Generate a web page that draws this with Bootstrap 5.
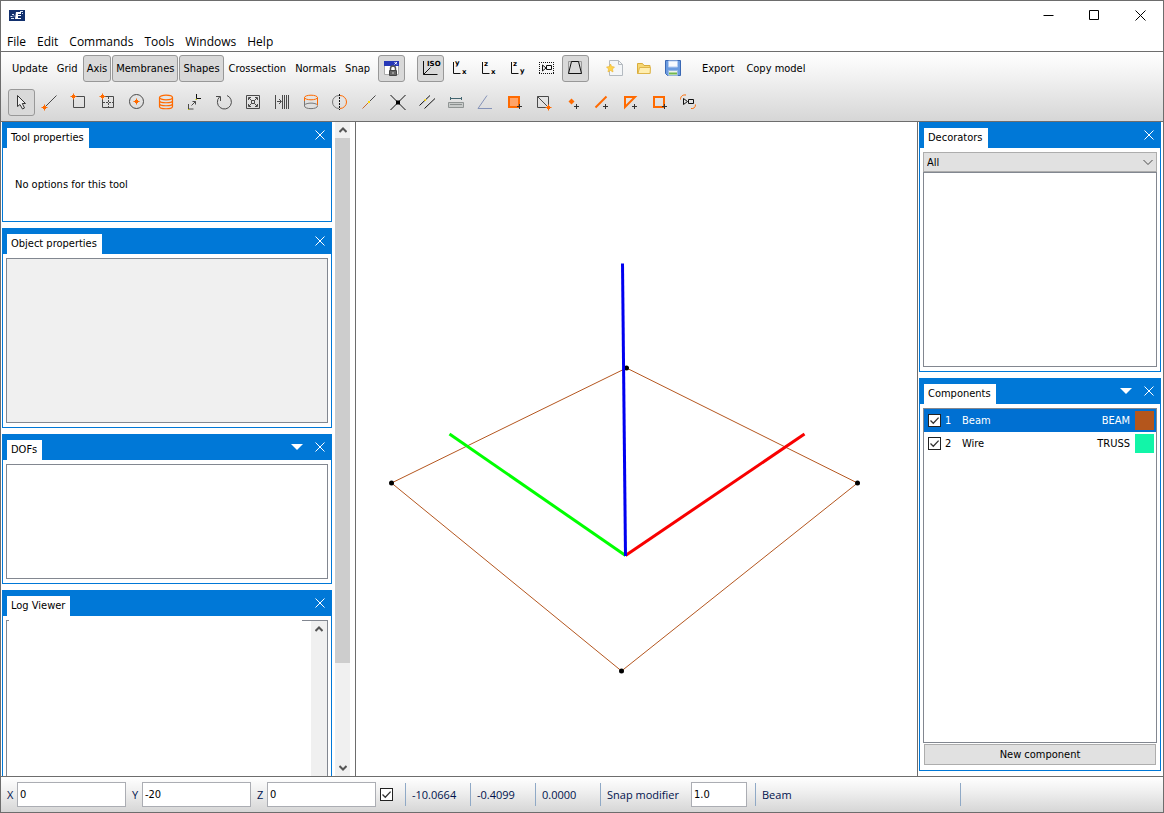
<!DOCTYPE html>
<html lang="en">
<head>
<meta charset="utf-8">
<meta name="viewport" content="width=device-width, initial-scale=1">
<title>Model editor</title>
<link href="https://cdn.jsdelivr.net/npm/bootstrap@5.3.0/dist/css/bootstrap.min.css" rel="stylesheet">
<style>
:root { --ui: "DejaVu Sans Condensed", "DejaVu Sans", sans-serif; --menu: "Open Sans", "Noto Sans", sans-serif; --accent: #0078d7; --line: #6d6d6d; --field: #828790; --orange: #ff6a00; }
body { font-family: var(--ui); font-size: 11px; line-height: 15px; color: #000; background: #fff; }
.app-window { height: 100vh; border: 1px solid var(--line); }
.titlebar { height: 28px; padding-left: 8px; }
.win-btn { width: 46px; height: 28px; border: 0; background: none; padding: 0; display: grid; place-items: center; }
.menubar { font-family: var(--menu); font-size: 12px; line-height: 16px; gap: 11px; padding: 5px 6px 1px; border-bottom: 1px solid var(--line); }
.menubar a { color: #000; text-decoration: none; }
.tools { background: linear-gradient(#fff, #f2f2f2 35%, #d6d6d6); border-bottom: 1px solid var(--line); padding: 3px 7px 5px; }
.tool-row { gap: 1px; }
.tool-row + .tool-row { margin-top: 7px; }
.tool { height: 27px; border: 1px solid transparent; border-radius: 3px; background: none; padding: 0 3px; color: #000; white-space: nowrap; line-height: 15px; }
.tool.on { border-color: #989898; background: #d9d9d9; }
.tool-icon { width: 27px; padding: 0; }
.tool-icon + .tool-icon { margin-left: 1px; }
.tool-icon svg { display: block; width: 25px; height: 25px; }
.tool svg text { font-family: "DejaVu Sans", sans-serif; font-weight: 700; font-size: 7px; fill: #000; stroke: none; }
svg { fill: none; stroke: #4a4a4a; stroke-width: 1; }
svg .o { stroke: var(--orange); }
svg .k { stroke: #111; }
.tool.gap-before { margin-left: 11px; }
.tool.gap-small { margin-left: 3px; }
.side-left { width: 355px; border-right: 1px solid var(--line); }
.stack { gap: 6px; padding-left: 1px; }
.dock { border: 1px solid var(--accent); background: #fff; }
.dock-head { background: var(--accent); height: 25px; padding-left: 4px; }
.dock-tab { background: #fff; height: 20px; padding: 2px 5px 0 4px; white-space: nowrap; line-height: 16px; }
.head-btn { border: 0; background: none; padding: 0; width: 23px; height: 23px; display: grid; place-items: center; }
.head-btn svg { stroke: #fff; }
.dock-body { padding: 4px 3px; }
.dock-body.roomy { padding-bottom: 5px; }
.well { border: 1px solid var(--field); }
.well.off { background: #f0f0f0; }
.tool-note { padding: 29px 12px 0; }
.h-tool { height: 100px; } .h-object { height: 200px; } .h-dof { height: 150px; } .h-log { height: 250px; }
.vbar { width: 15px; margin: 0 5px 0 3px; background: #f0f0f0; }
.vbar button, .logbar button { border: 0; background: none; padding: 0; height: 16px; display: grid; place-items: center; }
.vbar svg, .logbar svg { stroke: #555; stroke-width: 2; }
.thumb { flex: 0 1 525px; background: #cdcdcd; }
.logbar { width: 16px; background: #f0f0f0; }
.log-area { border: 0; resize: none; outline: 0; margin: -1px 9px 0 2px; background: #fff; }
.side-right { width: 246px; border-left: 1px solid var(--line); padding: 0 2px 5px 1px; gap: 6px; }
.h-decor { height: 250px; }
.combo { appearance: none; height: 20px; border: 1px solid #adadad; background-color: #e1e1e1; border-radius: 0; padding: 0 3px; font-size: 11px; line-height: 15px; color: #000; }
.combo-wrap svg { position: absolute; right: 4px; top: 7px; pointer-events: none; }
.comp-table { border-collapse: collapse; width: 100%; table-layout: fixed; }
.comp-table td { height: 23px; padding: 0; vertical-align: middle; }
.comp-table tr.sel { background: #0070d2; color: #fff; }
.c-check { width: 21px; } .c-num { width: 17px; } .c-color { width: 26px; }
.check { appearance: none; display: block; width: 13px; height: 13px; margin: 0; border: 1px solid #222; background: #fff url("data:image/svg+xml,%3Csvg xmlns='http://www.w3.org/2000/svg' viewBox='0 0 11 11'%3E%3Cpath d='M1.5 5.5l2.8 2.8L9.6 2.6' fill='none' stroke='%23333' stroke-width='1.3'/%3E%3C/svg%3E"); }
.check:not(:checked) { background-image: none; }
.swatch { width: 19px; height: 19px; margin-left: 5px; }
.push { height: 21px; border: 1px solid #adadad; background: #e1e1e1; padding: 0; margin: 1px 1px 0; }
.status { font-family: var(--menu); background: linear-gradient(#fff, #f2f2f2 35%, #d6d6d6); border-top: 1px solid var(--line); height: 36px; color: #00134d; padding-left: 6px; }
.status input[type=text] { font-family: var(--ui); height: 25px; border: 1px solid #abadb3; padding: 0 2px; color: #000; border-radius: 0; background: #fff; }
.axis-label { width: 10px; }
.w-axis { width: 109px; margin-right: 6px; }
.status .check { margin: 0 12px 0 -2px; }
.w-snap { width: 56px; margin-right: 8px; }
.cell { border-left: 1px solid #8fa9c6; height: 23px; padding-left: 6px; width: 65px; line-height: 23px; white-space: nowrap; }
.snap-cell { width: 91px; }
.name-cell { width: 205px; }
</style>
</head>
<body>
<svg width="0" height="0" class="position-absolute" aria-hidden="true">
  <defs>
    <g id="oplus"><path d="M-3 0H3M0-3V3" stroke="#ff6a00"/><path d="M-1.500-1.500h3v3h-3z" fill="#ff6a00" stroke="none"/></g>
    <path id="dplus" d="M-2.500 0H2.500M0-2.500V2.500" stroke="#333"/>
  </defs>
</svg>
<div class="app-window d-flex flex-column overflow-hidden">
  <header class="titlebar d-flex align-items-center">
    <svg width="16" height="11" viewBox="0 0 16 11" stroke="none"><path fill="#12306e" stroke="none" d="M0 0h16v11H0z"/><path d="M7 2h5v2H9v1h3v1H9v2h3v1H6z" fill="#fff" stroke="none"/><path d="M1.500 6.500h2M3 4.500h2M2 8.500h3M11 1.500h3M13 3.500h1M4.500 6h1" stroke="#dbe6f8"/></svg>
    <div class="d-flex ms-auto">
      <button class="win-btn" aria-label="Minimize"><svg width="11" height="11"><path d="M.5 5.500h10" stroke="#000"/></svg></button>
      <button class="win-btn" aria-label="Maximize"><svg width="11" height="11"><path d="M.5.5h9v9h-9z" stroke="#000"/></svg></button>
      <button class="win-btn" aria-label="Close"><svg width="11" height="11"><path d="M.5.5l10 10M10.500.5l-10 10" stroke="#000"/></svg></button>
    </div>
  </header>
  <nav class="menubar d-flex">
    <a href="#">File</a><a href="#">Edit</a><a href="#">Commands</a><a href="#">Tools</a><a href="#">Windows</a><a href="#">Help</a>
  </nav>
  <div class="tools" role="toolbar">
    <div class="tool-row d-flex">
      <button class="tool">Update</button>
      <button class="tool">Grid</button>
      <button class="tool on">Axis</button>
      <button class="tool on">Membranes</button>
      <button class="tool on">Shapes</button>
      <button class="tool">Crossection</button>
      <button class="tool">Normals</button>
      <button class="tool">Snap</button>
      <button class="tool tool-icon on gap-small" aria-label="Lock windows"><svg><path d="M5.500 5.500h14v13h-14z" fill="#fff" stroke="#aaa"/><path d="M5 5h15v5H5z" fill="#2638b8" stroke="none"/><path d="M15.500 6l2.500 2.500M18 6l-2.500 2.500" stroke="#fff"/><path d="M10.500 14.500h7v5h-7z" fill="#666" stroke="#444"/><path d="M11.500 14v-1.500a2.500 2.500 0 0 1 5 0V14" stroke="#555" stroke-width="1.500"/><path d="M14 16v2" stroke="#ccc"/></svg></button>
      <button class="tool tool-icon on gap-before" aria-label="Isometric view"><svg><path class="k" d="M5.500 5v13.500H19.500M5.500 18.500l7-7"/><text x="9" y="10">ISO</text></svg></button>
      <button class="tool tool-icon" aria-label="XY view"><svg><path class="k" d="M6.500 6v11.500h7"/><text x="8" y="9">y</text><text x="15" y="18">x</text></svg></button>
      <button class="tool tool-icon" aria-label="XZ view"><svg><path class="k" d="M6.500 6v11.500h7"/><text x="8" y="10">z</text><text x="15" y="18">x</text></svg></button>
      <button class="tool tool-icon" aria-label="YZ view"><svg><path class="k" d="M6.500 6v11.500h7"/><text x="8" y="10">z</text><text x="15" y="17">y</text></svg></button>
      <button class="tool tool-icon" aria-label="Camera frame"><svg><path class="k" d="M5 6.500h15M5 17.500h15M5.500 6v12M19.500 6v12" stroke-dasharray="1 1"/><path class="k" d="M8.500 9v6l3.500-3zM12.500 9.500h5v4h-5z"/></svg></button>
      <button class="tool tool-icon on" aria-label="Perspective"><svg><path d="M5.500 5.500h13v12h-13z" stroke="#999"/><path class="k" d="M8.500 5.500h7l3 12h-13z"/></svg></button>
      <button class="tool tool-icon gap-before" aria-label="New"><svg><path d="M7.500 4.500h9l4 4v11h-13z" fill="#f4f6f8" stroke="#b4bac0"/><path d="M16.500 4.500v4h4" stroke="#b4bac0"/><path d="M8.500 8l1.200 2.600 2.800.4-2 2 .5 3-2.500-1.500L6 16l.5-3-2-2 2.800-.4z" fill="#ffd34a" stroke="#eab130" stroke-width=".6"/></svg></button>
      <button class="tool tool-icon" aria-label="Open"><svg><path d="M6.500 17.500v-10h5l1.500 2h6v8z" fill="#f6d773" stroke="#d9ac3c"/><path d="M7 17.500l1.500-6h11l-.5 6z" fill="#ffeeb0" stroke="#dfb64c"/></svg></button>
      <button class="tool tool-icon" aria-label="Save"><svg><path d="M5.500 4.500h15v15h-13l-2-2z" fill="#6a9be0" stroke="#3a68b4"/><path d="M8.500 5h9v6h-9z" fill="#f6faff" stroke="#b5cdf0"/><path d="M8.500 14.500h9v5h-9z" fill="#eef3ee" stroke="#9ab8e0"/><path d="M9 17.500h8" stroke="#72b84e" stroke-width="2"/></svg></button>
      <button class="tool gap-before">Export</button>
      <button class="tool gap-small">Copy model</button>
    </div>
    <div class="tool-row d-flex">
      <button class="tool tool-icon on" aria-label="Select"><svg><path d="M8.500 5.500v11l2.500-2 2.500 4.500 2-1-2.200-4.500h3.200z" fill="#eee" stroke="#333"/></svg></button>
      <button class="tool tool-icon" aria-label="Line"><svg><path d="M7.500 16.500l11-11"/><use href="#oplus" x="6.500" y="17.500"/></svg></button>
      <button class="tool tool-icon" aria-label="Rectangle"><svg><path d="M6.500 6.500h11v11h-11z"/><use href="#oplus" x="6.500" y="6.500"/></svg></button>
      <button class="tool tool-icon" aria-label="Grid rectangle"><svg><path d="M6.500 6.500h11v11h-11z"/><path d="M12.500 7v10M7 12.500h10" stroke-dasharray="2 1"/><use href="#oplus" x="6.500" y="6.500"/></svg></button>
      <button class="tool tool-icon" aria-label="Circle"><svg><circle cx="11.500" cy="11.500" r="7"/><use href="#oplus" x="11.500" y="11.500"/></svg></button>
      <button class="tool tool-icon" aria-label="Cylinder"><svg><g class="o" stroke-width="1.200"><ellipse cx="12" cy="7.500" rx="6.500" ry="2.300"/><path d="M5.500 7.500v9c0 3 13 3 13 0v-9M5.500 10.500c0 3 13 3 13 0M5.500 13.500c0 3 13 3 13 0"/></g></svg></button>
      <button class="tool tool-icon" aria-label="Move"><svg><path class="k" d="M13.500 4v4.500H18"/><path d="M8.500 15.500l4-4M9.500 11.500h3v3M5.500 14v5h5"/><path d="M12.500 9.500h1.500M5 19.500h1" stroke="#cc0"/></svg></button>
      <button class="tool tool-icon" aria-label="Rotate"><svg><path d="M15 5.500a7 7 0 1 1-7.500 1.500M4 6.500h4.500v4.500"/></svg></button>
      <button class="tool tool-icon" aria-label="Scale"><svg><path d="M5.500 5.500h13v13h-13z"/><path d="M10.500 10.500h3v3h-3zM8 8l2.500 2.500M16 8l-2.500 2.500M8 16l2.500-2.500M16 16l-2.500-2.500M7.500 10V7.500H10M14 7.500h2.500V10M7.500 14v2.500H10M14 16.500h2.500V14"/></svg></button>
      <button class="tool tool-icon" aria-label="Array"><svg><path d="M5.500 5v14M7 11.500h4M9 9l2.500 2.500L9 14M12.500 5v14M14.500 5v14M16.500 5v14M18.500 5v14"/></svg></button>
      <button class="tool tool-icon" aria-label="Loft"><svg><ellipse cx="12" cy="7.500" rx="6.500" ry="2.300" class="o"/><path class="o" d="M18.500 7.500v8M5.500 7.500v4"/><path d="M5.500 11v5c0 3.500 13 3.500 13 0M5.500 15c2-2.500 11-2.500 13 0" stroke="#777"/></svg></button>
      <button class="tool tool-icon" aria-label="Mirror"><svg><path d="M11 5.500a6.500 6.500 0 0 0 0 13" stroke="#777"/><path class="o" d="M12 5.500a6.500 6.500 0 0 1 0 13"/><path class="k" d="M11.500 4v16" stroke-dasharray="2 1"/></svg></button>
      <button class="tool tool-icon" aria-label="Split"><svg><path d="M5.500 18.500l6-6" stroke="#c76b30"/><path d="M12.500 11.500l6-6"/><path d="M11 12h2" stroke="#ffd800" stroke-width="2"/></svg></button>
      <button class="tool tool-icon" aria-label="Intersect"><svg><path class="k" d="M4.500 5l15 15M19.500 5l-15 15"/><path d="M10 10.500h4v4h-4z" fill="#000" stroke="none"/></svg></button>
      <button class="tool tool-icon" aria-label="Parallel"><svg><path class="k" d="M4.500 15.500l10.500-10M9.500 18.500l10.500-10"/><path d="M9.500 10h1.500" stroke="#ffd800" stroke-width="2"/></svg></button>
      <button class="tool tool-icon" aria-label="Measure"><svg><path d="M4.500 12.500h15v5h-15z" fill="#c8cbca" stroke="#909594"/><path d="M6 14.500h12" stroke="#8b908f"/><path d="M6.500 8.500h11M6.500 7v3M17.500 7v3" stroke="#426570"/></svg></button>
      <button class="tool tool-icon" aria-label="Angle"><svg><path d="M14 5.500l-9 13h14" stroke="#8593b8"/></svg></button>
      <button class="tool tool-icon" aria-label="Add surface"><svg><path d="M7 7h10v10H7z" fill="#ffa468" class="o" stroke-width="2"/><use href="#dplus" x="17.500" y="16.500"/></svg></button>
      <button class="tool tool-icon" aria-label="Add opening"><svg><path d="M6.500 6.500h11v11h-11zM6.500 6.500l11 11"/><use href="#oplus" x="17.500" y="17.500"/></svg></button>
      <button class="tool tool-icon" aria-label="Add point"><svg><path d="M11.500 8.500l3 3-3 3-3-3z" fill="#ff6a00" stroke="none"/><use href="#dplus" x="16.500" y="16.500"/></svg></button>
      <button class="tool tool-icon" aria-label="Add line"><svg><path class="o" d="M6.500 17.500l11-11" stroke-width="2"/><use href="#dplus" x="16.500" y="16.500"/></svg></button>
      <button class="tool tool-icon" aria-label="Add triangle"><svg><path class="o" d="M7 7h10l-10 10z" stroke-width="2"/><use href="#dplus" x="16.500" y="16.500"/></svg></button>
      <button class="tool tool-icon" aria-label="Add square"><svg><path class="o" d="M7 7h10v10H7z" stroke-width="2"/><use href="#dplus" x="17.500" y="16.500"/></svg></button>
      <button class="tool tool-icon" aria-label="Orbit camera"><svg><path class="o" d="M4.500 9.500c0-3 2-5 5.500-4.500M19.500 14.500c0 3-2 4.500-4.500 4"/><path class="k" d="M7.500 8.500v6l4-3zM12.500 9.500h5v4h-5z"/></svg></button>
    </div>
  </div>

  <main class="d-flex flex-grow-1 overflow-hidden">
    <aside class="side-left d-flex flex-shrink-0">
      <div class="stack d-flex flex-column flex-grow-1 overflow-hidden">
        <section class="dock h-tool flex-shrink-0">
          <div class="dock-head d-flex align-items-end"><span class="dock-tab">Tool properties</span>
            <button class="head-btn ms-auto align-self-start" aria-label="Close"><svg width="10" height="10"><path d="M.5.5l9 9M9.500.5l-9 9"/></svg></button></div>
          <div class="tool-note">No options for this tool</div>
        </section>
        <section class="dock h-object flex-shrink-0 d-flex flex-column">
          <div class="dock-head d-flex align-items-end"><span class="dock-tab">Object properties</span>
            <button class="head-btn ms-auto align-self-start" aria-label="Close"><svg width="10" height="10"><path d="M.5.5l9 9M9.500.5l-9 9"/></svg></button></div>
          <div class="dock-body flex-grow-1 d-flex"><div class="well off flex-grow-1"></div></div>
        </section>
        <section class="dock h-dof flex-shrink-0 d-flex flex-column">
          <div class="dock-head d-flex align-items-end"><span class="dock-tab">DOFs</span>
            <button class="head-btn ms-auto align-self-start" aria-label="Menu"><svg width="12" height="6"><path d="M0 0h12L6 6z" fill="#fff" stroke="none"/></svg></button>
            <button class="head-btn align-self-start" aria-label="Close"><svg width="10" height="10"><path d="M.5.5l9 9M9.500.5l-9 9"/></svg></button></div>
          <div class="dock-body flex-grow-1 d-flex"><div class="well flex-grow-1"></div></div>
        </section>
        <section class="dock h-log flex-shrink-0 d-flex flex-column">
          <div class="dock-head d-flex align-items-end"><span class="dock-tab">Log Viewer</span>
            <button class="head-btn ms-auto align-self-start" aria-label="Close"><svg width="10" height="10"><path d="M.5.5l9 9M9.500.5l-9 9"/></svg></button></div>
          <div class="dock-body flex-grow-1 d-flex"><div class="well flex-grow-1 d-flex"><textarea class="log-area flex-grow-1" aria-label="Log" readonly></textarea>
            <div class="logbar"><button class="w-100" aria-label="Scroll up"><svg width="8" height="6"><path d="M.5 5L4 1.500 7.500 5"/></svg></button></div></div></div>
        </section>
      </div>
      <div class="vbar d-flex flex-column flex-shrink-0">
        <button aria-label="Scroll up"><svg width="8" height="6"><path d="M.5 5L4 1.500 7.500 5"/></svg></button>
        <div class="thumb"></div>
        <button class="mt-auto" aria-label="Scroll down"><svg width="8" height="6"><path d="M.5 1L4 4.500 7.500 1"/></svg></button>
      </div>
    </aside>

    <div class="flex-grow-1 overflow-hidden">
      <svg class="w-100 h-100 d-block" viewBox="356 122 561 654" role="img" aria-label="Isometric view of the model">
        <path d="M626.500 368L391.500 483 621.500 671 857.500 483z" stroke="#b4561f"/>
        <g fill="#000" stroke="none"><circle cx="626.500" cy="368" r="2.500"/><circle cx="391.500" cy="483" r="2.500"/><circle cx="621.500" cy="671" r="2.500"/><circle cx="857.500" cy="483" r="2.500"/></g>
        <g stroke-width="3"><path d="M625.500 555.500L449.500 434" stroke="#00ff00"/><path d="M625.500 555.500L804.500 434" stroke="#f80000"/><path d="M625.500 556L622.500 263.500" stroke="#0000f0"/></g>
      </svg>
    </div>

    <aside class="side-right d-flex flex-column flex-shrink-0">
      <section class="dock h-decor flex-shrink-0 d-flex flex-column">
        <div class="dock-head d-flex align-items-end"><span class="dock-tab">Decorators</span>
          <button class="head-btn ms-auto align-self-start" aria-label="Close"><svg width="10" height="10"><path d="M.5.5l9 9M9.500.5l-9 9"/></svg></button></div>
        <div class="dock-body flex-grow-1 d-flex flex-column">
          <div class="combo-wrap position-relative"><select class="combo w-100 d-block" aria-label="Decorator filter"><option>All</option></select>
            <svg width="10" height="7"><path d="M.5 1L5 5.500 9.500 1"/></svg></div>
          <div class="well flex-grow-1"></div>
        </div>
      </section>
      <section class="dock flex-grow-1 d-flex flex-column">
        <div class="dock-head d-flex align-items-end"><span class="dock-tab">Components</span>
          <button class="head-btn ms-auto align-self-start" aria-label="Menu"><svg width="12" height="6"><path d="M0 0h12L6 6z" fill="#fff" stroke="none"/></svg></button>
          <button class="head-btn align-self-start" aria-label="Close"><svg width="10" height="10"><path d="M.5.5l9 9M9.500.5l-9 9"/></svg></button></div>
        <div class="dock-body roomy flex-grow-1 d-flex flex-column">
          <div class="well flex-grow-1">
            <table class="comp-table">
              <colgroup><col class="c-check"><col class="c-num"><col><col><col class="c-color"></colgroup>
              <tbody>
              <tr class="sel"><td class="ps-1"><input class="check" type="checkbox" id="c1" checked></td><td><label for="c1">1</label></td><td>Beam</td><td class="text-end">BEAM</td><td><div class="swatch" style="background:#b4561c"></div></td></tr>
              <tr><td class="ps-1"><input class="check" type="checkbox" id="c2" checked></td><td><label for="c2">2</label></td><td>Wire</td><td class="text-end">TRUSS</td><td><div class="swatch" style="background:#12f5a8"></div></td></tr>
              </tbody>
            </table>
          </div>
          <button class="push">New component</button>
        </div>
      </section>
    </aside>
  </main>

  <footer class="status d-flex align-items-center flex-shrink-0">
    <label class="axis-label" for="fx">X</label><input class="w-axis" type="text" id="fx" value="0">
    <label class="axis-label" for="fy">Y</label><input class="w-axis" type="text" id="fy" value="-20">
    <label class="axis-label" for="fz">Z</label><input class="w-axis" type="text" id="fz" value="0">
    <input class="check" type="checkbox" checked aria-label="Lock coordinates">
    <span class="cell">-10.0664</span><span class="cell">-0.4099</span><span class="cell">0.0000</span>
    <label class="cell snap-cell" for="sm">Snap modifier</label><input class="w-snap" type="text" id="sm" value="1.0">
    <span class="cell name-cell">Beam</span><span class="cell"></span>
  </footer>
</div>
<script src="https://cdn.jsdelivr.net/npm/bootstrap@5.3.0/dist/js/bootstrap.bundle.min.js"></script>
</body>
</html>
